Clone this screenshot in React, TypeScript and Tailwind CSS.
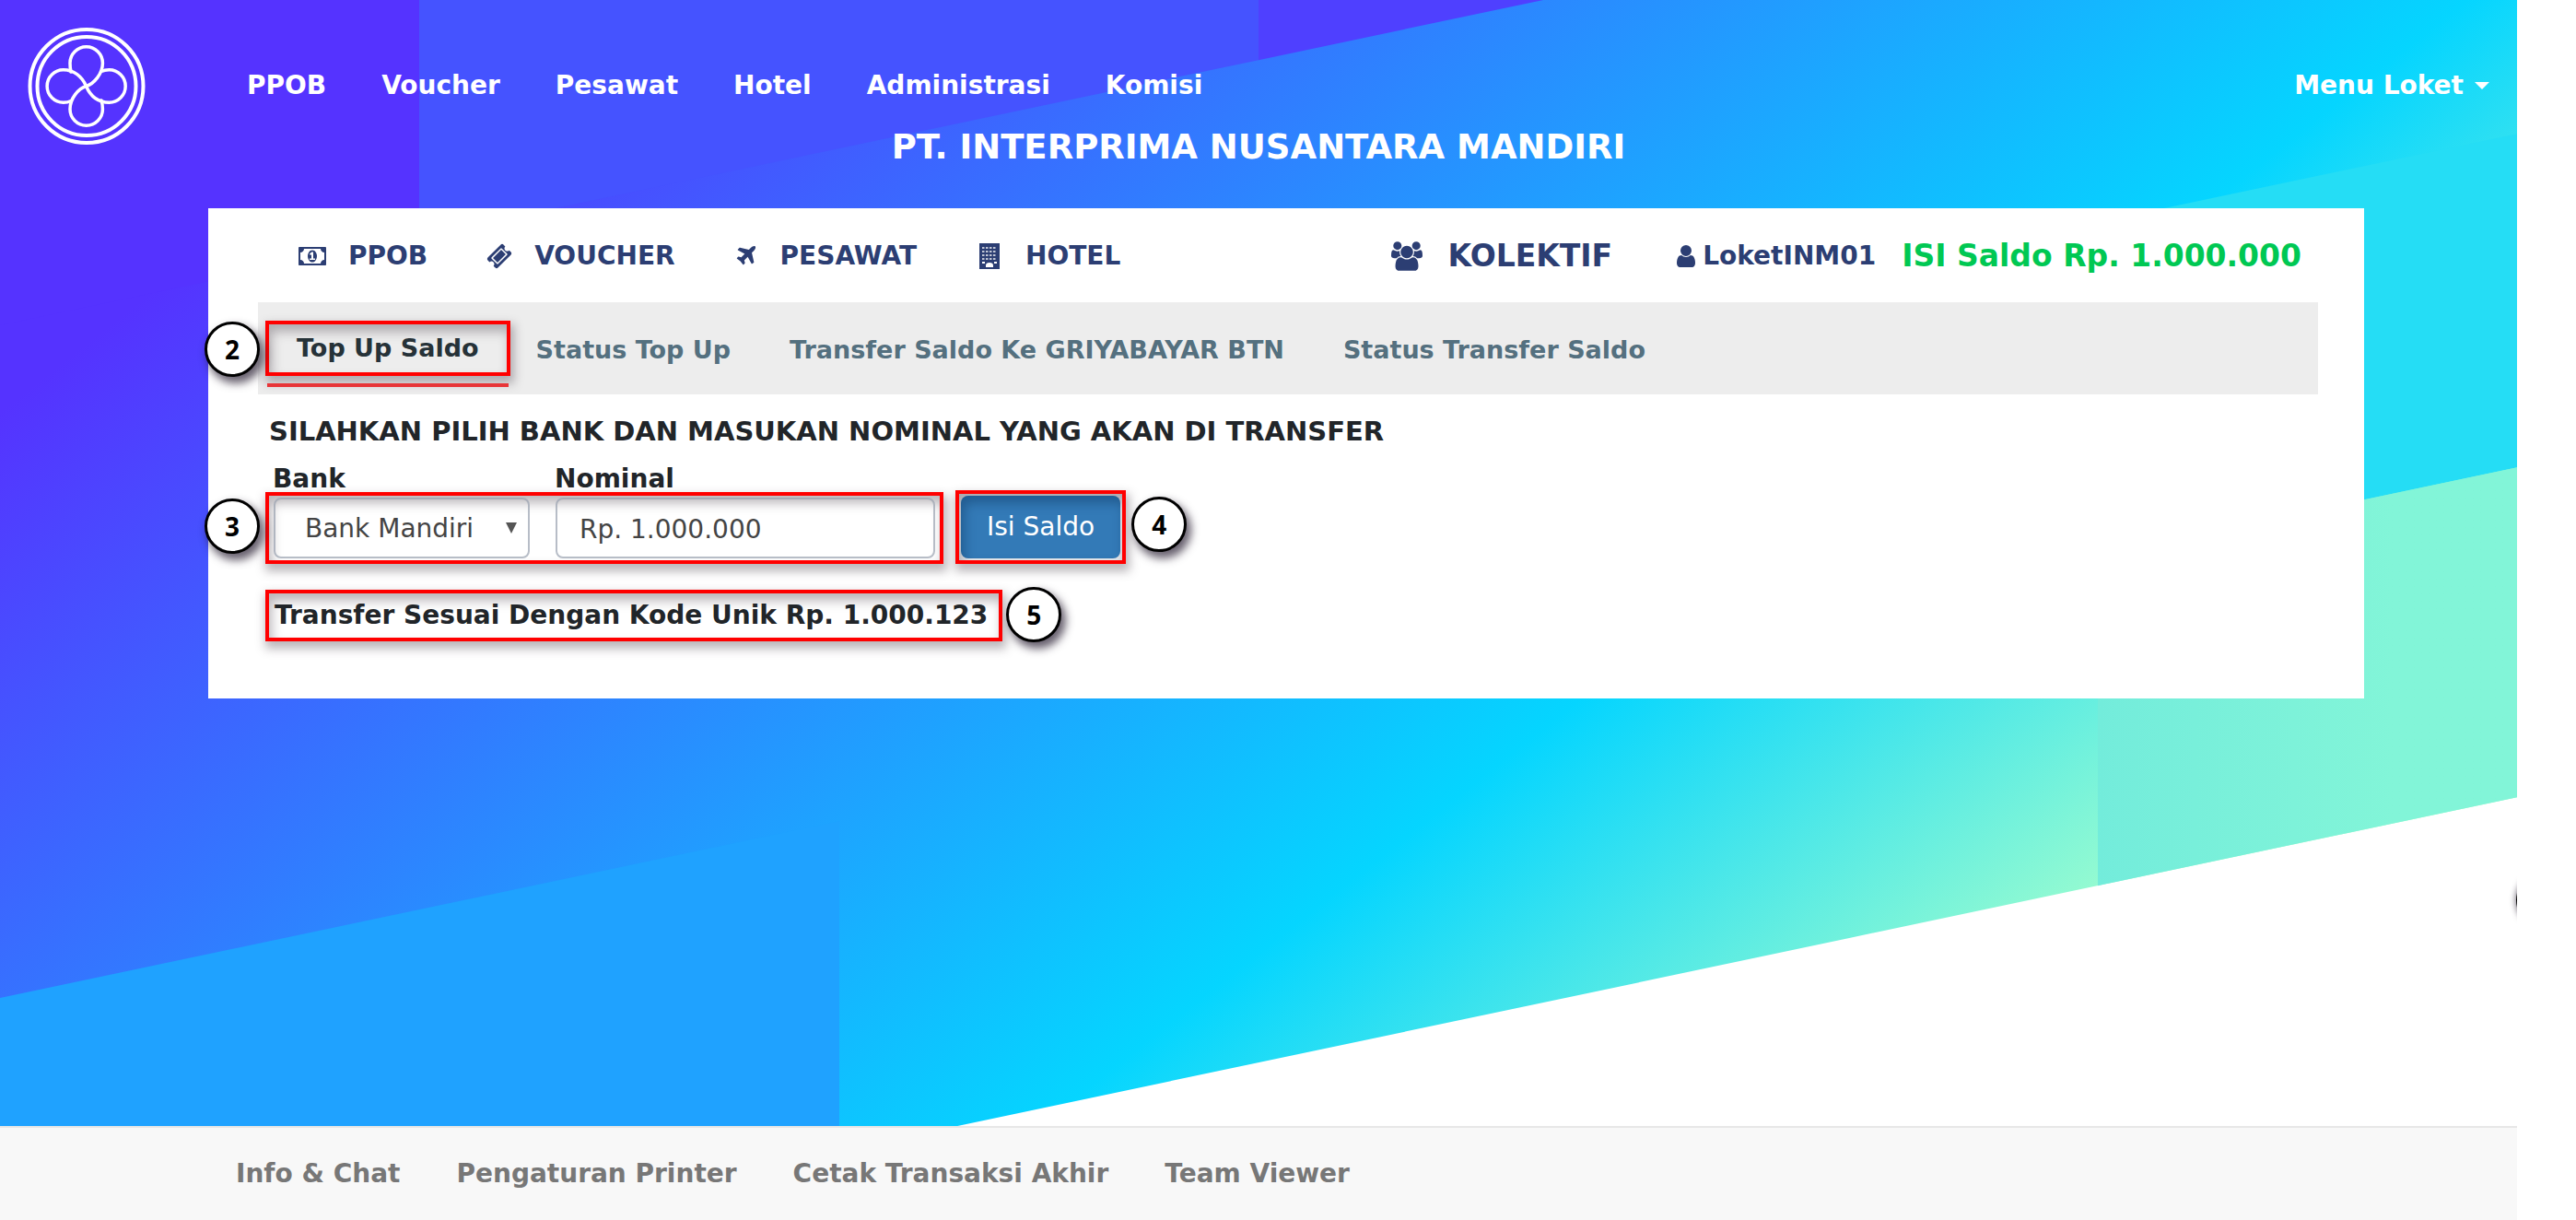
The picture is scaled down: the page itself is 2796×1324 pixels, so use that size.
import React from "react";

const topLinks = ["PPOB", "Voucher", "Pesawat", "Hotel", "Administrasi", "Komisi"];
const footerLinks = ["Info & Chat", "Pengaturan Printer", "Cetak Transaksi Akhir", "Team Viewer"];
const tabs = ["Status Top Up", "Transfer Saldo Ke GRIYABAYAR BTN", "Status Transfer Saldo"];

function Logo() {
  return (
    <svg viewBox="0 0 128 128" className="size-32" fill="none" stroke="#fff" aria-hidden="true">
      <circle cx="64" cy="63.500" r="61.500" strokeWidth="4" />
      <circle cx="64" cy="63.500" r="53.500" strokeWidth="4" />
      <g strokeWidth="3.5" strokeLinecap="round">
        <path d="M47 48C46 44 46 42 46 38.500A17.700 17.700 0 0 1 81.400 38.500C81.400 50 72 61 63.500 63.500C55 66 46 77 46 88.500A17.700 17.700 0 0 0 81.400 88.500C81.400 85 81 82 80 79" />
        <path d="M80 47.500C83 46 85 45.800 88.500 45.800A17.700 17.700 0 0 1 88.500 81.200C75 81.200 68 74 63.500 63.500C59 53 50 45.800 38.800 45.800A17.700 17.700 0 0 0 38.800 81.200C42 81.200 45 80.500 47 79.500" />
      </g>
    </svg>
  );
}

function MoneyIcon() {
  return (
    <svg viewBox="0 0 1920 1792" className="h-7 w-[30px]" fill="currentColor" aria-hidden="true">
      <path d="M768 1152h384v-96h-128v-448h-114l-148 137 77 80q42-37 55-57h2v288h-128v96zM1280 896q0 70-21 142t-59.500 134-101.500 101-138 39-138-39-101.500-101-59.500-134-21-142 21-142 59.500-134 101.500-101 138-39 138 39 101.500 101 59.500 134 21 142zM1792 1152v-512q-106 0-181-75t-75-181h-1152q0 106-75 181t-181 75v512q106 0 181 75t75 181h1152q0-106 75-181t181-75zM1920 320v1152q0 26-19 45t-45 19h-1792q-26 0-45-19t-19-45v-1152q0-26 19-45t45-19h1792q26 0 45 19t19 45z" />
    </svg>
  );
}

function TicketIcon() {
  return (
    <svg viewBox="0 0 1792 1792" className="size-7" fill="currentColor" aria-hidden="true">
      <path d="M1024 452l316 316-572 572-316-316zM813 1431l618-618q19-19 19-45t-19-45l-362-362q-18-18-45-18t-45 18l-618 618q-19 19-19 45t19 45l362 362q18 18 45 18t45-18zM1702 794l-907 908q-37 37-90.500 37t-90.500-37l-126-126q56-56 56-136t-56-136-136-56-136 56l-125-126q-37-37-37-90.500t37-90.500l907-906q37-37 90.500-37t90.500 37l125 125q-56 56-56 136t56 136 136 56 136-56l126 125q37 37 37 90.500t-37 90.500z" />
    </svg>
  );
}

function PlaneIcon() {
  return (
    <svg viewBox="0 0 1792 1792" className="size-[26px]" fill="currentColor" aria-hidden="true">
      <path d="M1568 160q44 52 12 148t-108 172l-161 161 160 696q5 19-12 33l-128 96q-7 6-19 6-4 0-7-1-15-3-21-16l-279-508-259 259 53 194q5 17-8 31l-96 96q-9 9-23 9h-2q-15-2-24-13l-189-252-252-189q-11-7-13-23-1-13 9-25l96-97q9-9 23-9 6 0 8 1l194 53 259-259-508-279q-14-8-17-24-2-16 9-27l128-128q14-13 30-8l665 159 160-160q76-76 172-108t148 12z" />
    </svg>
  );
}

function HotelIcon() {
  return (
    <svg viewBox="0 0 22 28" className="h-7 w-[22px]" aria-hidden="true">
      <path fill="currentColor" d="M0 0h22v28H0z" />
      <path
        stroke="#fff"
        strokeWidth="2"
        strokeDasharray="2.500 1.500"
        opacity=".7"
        d="M3 5h16M3 9h16M3 13h16M3 17h16"
      />
      <path fill="#fff" d="M7 26v-2a4 3 0 0 1 8 0v2zM3 20h3v2H3zM16 20h3v2h-3z" />
    </svg>
  );
}

function UsersIcon() {
  return (
    <svg viewBox="64 0 1920 1792" className="h-8 w-[34px]" fill="currentColor" aria-hidden="true">
      <path d="M657 896q-162 5-265 128h-134q-82 0-138-40.500t-56-118.500q0-353 124-353 6 0 43.500 21t97.500 42.500 119 21.500q67 0 133-23-5 37-5 66 0 139 81 256zm1071 637q0 120-73 189.500t-194 69.500h-874q-121 0-194-69.500t-73-189.500q0-53 3.500-103.500t14-109 26.500-108.500 43-97.500 62-81 85.500-53.500 111.500-20q10 0 43 21.500t73 48 107 48 135 21.500 135-21.500 107-48 73-48 43-21.500q61 0 111.500 20t85.500 53.500 62 81 43 97.500 26.500 108.500 14 109 3.500 103.500zm-1024-1277q0 106-75 181t-181 75-181-75-75-181 75-181 181-75 181 75 75 181zm704 384q0 159-112.500 271.500t-271.500 112.500-271.500-112.500-112.500-271.500 112.500-271.500 271.500-112.500 271.500 112.500 112.500 271.500zm576 225q0 78-56 118.500t-138 40.500h-134q-103-123-265-128 81-117 81-256 0-29-5-66 66 23 133 23 59 0 119-21.500t97.500-42.500 43.500-21q124 0 124 353zm-128-609q0 106-75 181t-181 75-181-75-75-181 75-181 181-75 181 75 75 181z" />
    </svg>
  );
}

function UserIcon() {
  return (
    <svg viewBox="256 128 1280 1536" className="h-6 w-5" fill="currentColor" aria-hidden="true">
      <path d="M1536 1399q0 109-62.500 187t-150.500 78h-854q-88 0-150.500-78t-62.500-187q0-85 8.500-160.500t31.500-152 58.500-131 94-89 134.500-34.500q131 128 313 128t313-128q76 0 134.500 34.500t94 89 58.500 131 31.500 152 8.500 160.500zM1280 512q0 159-112.500 271.500t-271.500 112.500-271.500-112.500-112.500-271.500 112.500-271.500 271.500-112.500 271.500 112.500 112.500 271.500z" />
    </svg>
  );
}

const frame =
  "border-4 border-[#ff0000] shadow-[2px_6px_10px_2px_rgba(60,50,60,0.35),inset_3px_8px_12px_rgba(60,50,60,0.35)]";

function Badge({ n, className }: { n: number; className: string }) {
  return (
    <span
      className={
        "absolute flex size-[60px] items-center justify-center rounded-full border-[3px] border-black bg-white font-['Noto_Sans',sans-serif] text-[28px] font-bold text-black shadow-[4px_6px_10px_1px_rgba(40,30,50,0.7)] " +
        className
      }
    >
      {n}
    </span>
  );
}

function Backdrop() {
  return (
    <div className="absolute inset-0 overflow-hidden bg-white" aria-hidden="true">
      <div className="-mt-[7px] grid h-[1448px] origin-top-left -skew-y-[11.9deg] grid-cols-6 grid-rows-[360px_368px_362px_358px] bg-[linear-gradient(150deg,#5533ff_15%,#05d5ff_70%,#a6ffcb_94%)]">
        <div className="col-start-1 row-start-1 bg-[#5533ff]" />
        <div className="col-span-2 col-start-2 row-start-1 bg-[#4553ff]" />
        <div className="col-span-3 col-start-4 row-start-1 bg-[#4f40ff]" />
        <div className="col-start-6 row-start-3 bg-[#25ddf5]" />
        <div className="col-span-2 col-start-1 row-start-4 bg-[#1fa2ff]" />
        <div className="col-start-6 row-start-4 bg-linear-to-r from-[#73ecdb] to-[#82f5d8] to-70%" />
      </div>
      <span className="absolute top-[947px] -right-[59px] size-[60px] rounded-full border-[3px] border-black shadow-[0_0_6px_1px_rgba(40,30,50,0.6)]" />
    </div>
  );
}

export default function App() {
  return (
    <div className="min-h-screen bg-white pr-16 font-['DejaVu_Sans',Verdana,sans-serif] text-[28px] leading-10">
      <div className="flex min-h-screen flex-col">
        <div className="relative flex-1">
          <Backdrop />
          <div className="relative">
            <header className="px-[30px] pt-[30px] font-bold text-white">
              <div className="flex h-[105px] items-start">
                <a href="#home" aria-label="Beranda">
                  <Logo />
                </a>
                <nav className="ml-[110px] flex flex-1 gap-[60px] pt-[43px]">
                  {topLinks.map((t) => (
                    <a key={t} href="#nav" className="whitespace-nowrap">
                      {t}
                    </a>
                  ))}
                </nav>
                <button className="mt-[43px] flex items-center gap-3 font-bold">
                  Menu Loket
                  <span className="border-x-8 border-t-8 border-x-transparent border-t-white" />
                </button>
              </div>
              <h1 className="h-[91px] text-center text-[37px] leading-[50px]">PT. INTERPRIMA NUSANTARA MANDIRI</h1>
            </header>

            <main className="mr-[166px] ml-[226px] bg-white px-[50px] pb-[62px] pl-[54px]">
              <div className="flex h-[102px] items-center justify-between pt-0.5 pr-[18px] pl-11 font-bold text-[#2c3e73]">
                <nav className="flex gap-16">
                  <a href="#ppob" className="flex items-center gap-6">
                    <MoneyIcon />
                    PPOB
                  </a>
                  <a href="#voucher" className="flex items-center gap-6">
                    <TicketIcon />
                    VOUCHER
                  </a>
                  <a href="#pesawat" className="flex items-center gap-6">
                    <PlaneIcon />
                    PESAWAT
                  </a>
                  <a href="#hotel" className="ml-1 flex items-center gap-7">
                    <HotelIcon />
                    HOTEL
                  </a>
                </nav>
                <div className="flex items-center">
                  <a href="#kolektif" className="mr-[70px] flex items-center gap-7 text-[33px]">
                    <UsersIcon />
                    KOLEKTIF
                  </a>
                  <a href="#akun" className="mr-7 flex items-center gap-2">
                    <UserIcon />
                    LoketINM01
                  </a>
                  <span className="text-[33px] text-[#00c853]">ISI Saldo Rp. 1.000.000</span>
                </div>
              </div>

              <nav className="flex h-[100px] items-center gap-16 bg-[#ededed] pl-2 text-[27px] font-bold text-[#54707f]">
                <div className="relative -mr-9">
                  <a href="#topup" className={"flex h-[60px] items-center justify-center px-[30px] whitespace-nowrap text-[#263238] " + frame}>
                    Top Up Saldo
                  </a>
                  <span className="absolute inset-x-0.5 -bottom-3 h-1 bg-[#e83538]" />
                  <Badge n={2} className="top-px right-full mr-1.5" />
                </div>
                {tabs.map((t) => (
                  <a key={t} href="#tab" className="pt-1 whitespace-nowrap">
                    {t}
                  </a>
                ))}
              </nav>

              <form className="pl-2 text-[#212529]" onSubmit={(e) => e.preventDefault()}>
                <h2 className="pt-5 pl-1 text-[29px] font-bold">
                  SILAHKAN PILIH BANK DAN MASUKAN NOMINAL YANG AKAN DI TRANSFER
                </h2>
                <div className="mt-5 flex gap-7 pl-2 leading-6 font-bold">
                  <label htmlFor="bank" className="w-[278px]">
                    Bank
                  </label>
                  <label htmlFor="nominal">Nominal</label>
                </div>
                <div className="flex items-end gap-[13px]">
                  <div className={"relative flex h-[78px] items-center gap-7 px-[5px] " + frame}>
                    <div className="relative">
                      <select
                        id="bank"
                        className="h-[66px] w-[278px] appearance-none rounded-lg border-2 border-gray-400/70 pt-0.5 pl-8 text-[#444]"
                      >
                        <option>Bank Mandiri</option>
                      </select>
                      <span className="pointer-events-none absolute top-[27px] right-3.5 border-x-[6px] border-t-[12px] border-x-transparent border-t-[#555]" />
                    </div>
                    <input
                      id="nominal"
                      defaultValue="Rp. 1.000.000"
                      className="h-[66px] w-[412px] rounded-lg border-2 border-gray-400/70 px-6 pt-0.5 text-[#444]"
                    />
                    <Badge n={3} className="top-[3px] right-full mr-2.5" />
                  </div>
                  <div className={"relative flex h-20 items-center justify-center bg-gray-200 px-0.5 " + frame}>
                    <button className="h-[68px] rounded-lg bg-[#337ab7] px-7 text-white shadow-[inset_4px_8px_12px_rgba(10,50,90,0.4)]">
                      Isi Saldo
                    </button>
                    <Badge n={4} className="top-[3px] left-full ml-2.5" />
                  </div>
                </div>
                <div className="mt-7 flex">
                  <p className={"relative flex h-14 items-center pr-3 pl-1.5 font-bold whitespace-nowrap " + frame}>
                    Transfer Sesuai Dengan Kode Unik Rp. 1.000.123
                    <Badge n={5} className="-top-[7px] left-full ml-2" />
                  </p>
                </div>
              </form>
            </main>
          </div>
        </div>

        <footer className="relative flex h-[102px] items-center gap-[61px] border-t-2 border-[#e7e7e7] bg-[#f8f8f8] pl-64 font-bold text-[#777]">
          {footerLinks.map((t) => (
            <a key={t} href="#footer" className="whitespace-nowrap">
              {t}
            </a>
          ))}
        </footer>
      </div>
    </div>
  );
}
